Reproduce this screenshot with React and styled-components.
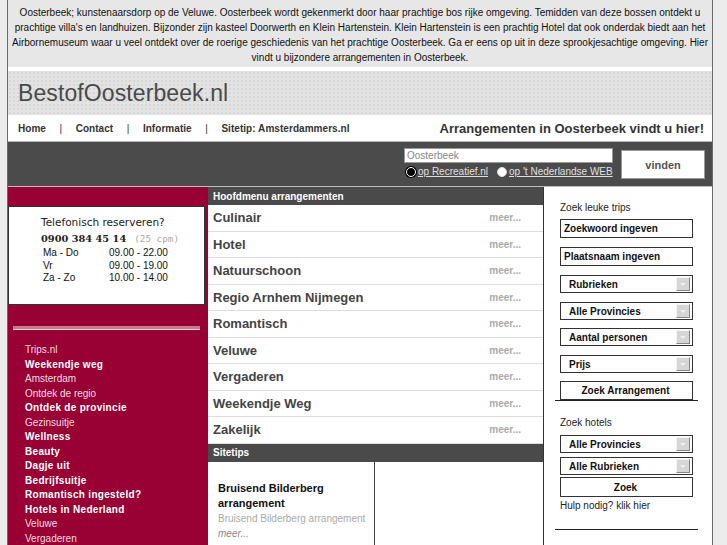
import React from 'react';
import styled, { createGlobalStyle } from 'styled-components';

const GlobalStyle = createGlobalStyle`
	body {
		margin: 0;
		background: #ececec;
		font-family: "Liberation Sans", Arial, sans-serif;
	}
`;

const Page = styled.div`
	width: 704px;
	margin-left: 7px;
	border-left: 1px solid #6a6a6a;
	border-right: 1px solid #6a6a6a;
	background: #fff;
	height: 545px;
	overflow: hidden;
`;

const Intro = styled.div`
	background: #e7e7e7;
	color: #111;
	font-size: 10px;
	line-height: 15px;
	text-align: center;
	padding: 5px 0 2px;
	white-space: nowrap;
`;

const Header = styled.div`
	margin-top: 4px;
	height: 44px;
	background-color: #e3e3e3;
	background-image: radial-gradient(#d6d6d6 0.8px, transparent 1px);
	background-size: 4px 4px;
	display: flex;
	align-items: center;
	padding-left: 10px;
`;

const Logo = styled.div`
	font-size: 23px;
	color: #4a4a4a;
	letter-spacing: 0.1px;
`;

const Nav = styled.div`
	height: 26px;
	display: flex;
	align-items: center;
	justify-content: space-between;
	padding: 0 8px 0 10px;
	border-bottom: 1px solid #b5b5b5;
`;

const NavLinks = styled.div`
	display: flex;
	align-items: center;
	font-size: 10px;
	font-weight: bold;
	letter-spacing: 0.05px;
	color: #333;
`;

const Sep = styled.span`
	margin: 0 13.5px;
	font-weight: normal;
`;

const Tagline = styled.div`
	font-size: 13px;
	font-weight: bold;
	color: #333;
`;

const SearchBar = styled.div`
	height: 45px;
	background: #4b4b4b;
	display: flex;
	justify-content: flex-end;
	padding: 6px 7px 0 0;
	box-sizing: border-box;
	border-bottom: 1px solid #bdbdbd;
`;

const SearchForm = styled.div`
	width: 209px;
	margin-right: 8px;
	display: flex;
	flex-direction: column;
`;

const SearchInput = styled.div`
	height: 13px;
	background: #fff;
	border: 1px solid #999;
	font-size: 10px;
	line-height: 13px;
	color: #888;
	padding-left: 2px;
`;

const RadioRow = styled.div`
	display: flex;
	align-items: center;
	margin-top: 3px;
	font-size: 10px;
	color: #e0e0e0;
`;

const Radio = styled.span`
	width: 8px;
	height: 8px;
	border-radius: 50%;
	background: ${(p) => (p.checked ? '#000' : '#fff')};
	border: 1px solid ${(p) => (p.checked ? '#fff' : '#ddd')};
	box-shadow: ${(p) => (p.checked ? '0 0 0 1px #000' : 'none')};
	margin: 0 2px 0 ${(p) => (p.first ? '2px' : '9px')};
`;

const RadioLabel = styled.span`
	text-decoration: underline;
`;

const FindButton = styled.div`
	width: 82px;
	height: 27px;
	margin-top: 2px;
	background: #fff;
	border: 1px solid #999;
	display: flex;
	align-items: center;
	justify-content: center;
	font-size: 11px;
	font-weight: bold;
	color: #555;
`;

const Columns = styled.div`
	display: flex;
`;

const LeftCol = styled.div`
	width: 199px;
	background: #990033;
	padding-top: 19px;
	height: 400px;
`;

const PhoneBox = styled.div`
	height: 99px;
	margin-right: 2px;
	background: #fff;
	border: 1px solid #333;
	padding: 7px 0 0 32px;
	box-sizing: border-box;
`;

const PhoneTitle = styled.div`
	font-family: "DejaVu Sans", Verdana, sans-serif;
	font-size: 10.5px;
	line-height: 16px;
	color: #222;
`;

const PhoneNumber = styled.div`
	font-family: "DejaVu Serif", "Liberation Serif", serif;
	font-size: 9.8px;
	line-height: 17px;
	font-weight: bold;
	color: #222;
	span {
		font-family: "DejaVu Sans Mono", "Liberation Mono", monospace;
		font-size: 9.3px;
		font-weight: normal;
		color: #aaa;
		margin-left: 8px;
	}
`;

const Hours = styled.div`
	display: grid;
	grid-template-columns: 66px auto;
	font-size: 10px;
	line-height: 12.5px;
	color: #111;
	padding-left: 2px;
`;

const PinkRule = styled.div`
	margin: 21px 7px 0 5px;
	height: 3px;
	background: #c97a90;
	border-bottom: 1px solid #f3dde3;
`;

const SideLinks = styled.div`
	padding: 13px 0 0 17px;
	display: flex;
	flex-direction: column;
`;

const SideLink = styled.div`
	font-size: 10px;
	line-height: 14.5px;
	font-weight: ${(p) => (p.bold ? 'bold' : 'normal')};
	color: ${(p) => (p.bold ? '#fff' : '#f4dbe2')};
	letter-spacing: ${(p) => (p.bold ? '0.3px' : '0')};
`;

const MidCol = styled.div`
	width: 335px;
	border-left: 1px solid #333;
	border-right: 1px solid #333;
`;

const BarTitle = styled.div`
	height: ${(p) => (p.tall ? 18 : 17)}px;
	line-height: ${(p) => (p.tall ? 18 : 17)}px;
	background: #4a4a4a;
	color: #fff;
	font-size: 10px;
	font-weight: bold;
	padding-left: 5px;
	border-top: ${(p) => (p.top ? '1px solid #4a4a4a' : 'none')};
`;

const MenuRow = styled.div`
	height: 25.5px;
	border-bottom: 1px solid #ddd;
	display: flex;
	align-items: center;
	justify-content: space-between;
	padding: 0 22px 0 5px;
`;

const MenuName = styled.span`
	font-size: 13px;
	font-weight: bold;
	color: #444;
`;

const More = styled.span`
	font-size: 10px;
	font-weight: bold;
	color: #aaa;
`;

const TipGrid = styled.div`
	display: grid;
	grid-template-columns: 167px 1fr;
	height: 90px;
`;

const TipCell = styled.div`
	border-right: ${(p) => (p.divider ? '1px solid #444' : 'none')};
	padding: 19px 0 0 10px;
`;

const TipTitle = styled.div`
	font-size: 11px;
	line-height: 15px;
	font-weight: bold;
	color: #111;
`;

const TipText = styled.div`
	font-size: 10px;
	line-height: 15px;
	color: #aaa;
`;

const TipMore = styled.div`
	font-size: 10px;
	line-height: 15px;
	font-style: italic;
	color: #888;
`;

const RightCol = styled.div`
	flex: 1;
	padding: 14px 0 0 16px;
	display: flex;
	flex-direction: column;
	width: 133px;
`;

const Label = styled.div`
	font-size: 10px;
	line-height: 14px;
	color: #222;
	margin-top: ${(p) => p.mt || 0}px;
`;

const Field = styled.div`
	width: 133px;
	height: ${(p) => p.h || 19}px;
	box-sizing: border-box;
	border: 1px solid #333;
	margin-top: ${(p) => p.mt || 0}px;
	display: flex;
	align-items: center;
	justify-content: ${(p) => (p.center ? 'center' : 'space-between')};
	padding: 0 2px 0 ${(p) => (p.center ? 0 : p.pl || 3)}px;
	font-size: 10px;
	font-weight: bold;
	color: #111;
	background: #fff;
`;

const Arrow = styled.span`
	width: 12px;
	height: 12px;
	background: #d6d6d6;
	border-top: 1px solid #f4f4f4;
	border-left: 1px solid #f4f4f4;
	border-right: 1px solid #888;
	border-bottom: 1px solid #888;
	position: relative;
	&::after {
		content: '';
		position: absolute;
		left: 3px;
		top: 5px;
		border-left: 3px solid transparent;
		border-right: 3px solid transparent;
		border-top: 3px solid #efefef;
	}
`;

const Rule = styled.div`
	margin: ${(p) => p.mt || 0}px 0 0 -5px;
	width: 143px;
	height: 1px;
	background: #222;
`;

const menu = [
	'Culinair',
	'Hotel',
	'Natuurschoon',
	'Regio Arnhem Nijmegen',
	'Romantisch',
	'Veluwe',
	'Vergaderen',
	'Weekendje Weg',
	'Zakelijk',
];

const sideLinks = [
	['Trips.nl', false],
	['Weekendje weg', true],
	['Amsterdam', false],
	['Ontdek de regio', false],
	['Ontdek de provincie', true],
	['Gezinsuitje', false],
	['Wellness', true],
	['Beauty', true],
	['Dagje uit', true],
	['Bedrijfsuitje', true],
	['Romantisch ingesteld?', true],
	['Hotels in Nederland', true],
	['Veluwe', false],
	['Vergaderen', false],
];

const Select = ({ children, mt, h }) => (
	<Field mt={mt} h={h || 18} pl={8}>
		{children}
		<Arrow />
	</Field>
);

export default function App() {
	return (
		<>
			<GlobalStyle />
			<Page>
				<Intro>
					Oosterbeek; kunstenaarsdorp op de Veluwe. Oosterbeek wordt gekenmerkt door haar prachtige bos rijke omgeving. Temidden van deze bossen ontdekt u
					<br />
					prachtige villa's en landhuizen. Bijzonder zijn kasteel Doorwerth en Klein Hartenstein. Klein Hartenstein is een prachtig Hotel dat ook onderdak biedt aan het
					<br />
					Airbornemuseum waar u veel ontdekt over de roerige geschiedenis van het prachtige Oosterbeek. Ga er eens op uit in deze sprookjesachtige omgeving. Hier
					<br />
					vindt u bijzondere arrangementen in Oosterbeek.
				</Intro>
				<Header>
					<Logo>BestofOosterbeek.nl</Logo>
				</Header>
				<Nav>
					<NavLinks>
						Home<Sep>|</Sep>Contact<Sep>|</Sep>Informatie<Sep>|</Sep>Sitetip: Amsterdammers.nl
					</NavLinks>
					<Tagline>Arrangementen in Oosterbeek vindt u hier!</Tagline>
				</Nav>
				<SearchBar>
					<SearchForm>
						<SearchInput>Oosterbeek</SearchInput>
						<RadioRow>
							<Radio checked first />
							<RadioLabel>op Recreatief.nl</RadioLabel>
							<Radio />
							<RadioLabel>op 't Nederlandse WEB</RadioLabel>
						</RadioRow>
					</SearchForm>
					<FindButton>vinden</FindButton>
				</SearchBar>
				<Columns>
					<LeftCol>
						<PhoneBox>
							<PhoneTitle>Telefonisch reserveren?</PhoneTitle>
							<PhoneNumber>
								0900 384 45 14<span>(25 cpm)</span>
							</PhoneNumber>
							<Hours>
								<span>Ma - Do</span>
								<span>09.00 - 22.00</span>
								<span>Vr</span>
								<span>09.00 - 19.00</span>
								<span>Za - Zo</span>
								<span>10.00 - 14.00</span>
							</Hours>
						</PhoneBox>
						<PinkRule />
						<SideLinks>
							{sideLinks.map(([name, bold]) => (
								<SideLink key={name} bold={bold}>
									{name}
								</SideLink>
							))}
						</SideLinks>
					</LeftCol>
					<MidCol>
						<BarTitle top>Hoofdmenu arrangementen</BarTitle>
						{menu.map((item) => (
							<MenuRow key={item}>
								<MenuName>{item}</MenuName>
								<More>meer...</More>
							</MenuRow>
						))}
						<BarTitle tall>Sitetips</BarTitle>
						<TipGrid>
							<TipCell divider>
								<TipTitle>
									Bruisend Bilderberg
									<br />
									arrangement
								</TipTitle>
								<TipText>Bruisend Bilderberg arrangement</TipText>
								<TipMore>meer...</TipMore>
							</TipCell>
							<TipCell />
						</TipGrid>
					</MidCol>
					<RightCol>
						<Label>Zoek leuke trips</Label>
						<Field mt={4}>Zoekwoord ingeven</Field>
						<Field mt={9}>Plaatsnaam ingeven</Field>
						<Select mt={9}>Rubrieken</Select>
						<Select mt={9}>Alle Provincies</Select>
						<Select mt={8}>Aantal personen</Select>
						<Select mt={9}>Prijs</Select>
						<Field mt={8} center>
							Zoek Arrangement
						</Field>
						<Rule />
						<Label mt={15}>Zoek hotels</Label>
						<Select mt={5}>Alle Provincies</Select>
						<Select mt={4}>Alle Rubrieken</Select>
						<Field mt={2} h={20} center>
							Zoek
						</Field>
						<Label mt={2}>Hulp nodig? klik hier</Label>
						<Rule mt={16} />
					</RightCol>
				</Columns>
			</Page>
		</>
	);
}
